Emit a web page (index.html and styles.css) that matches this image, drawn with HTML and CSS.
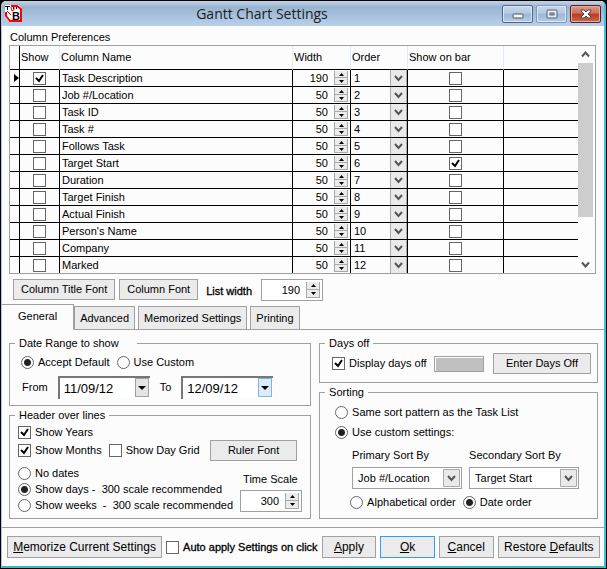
FILE: index.html
```html
<!DOCTYPE html>
<html lang="en">
<head>
    <meta charset="UTF-8">
    <meta name="viewport" content="width=device-width, initial-scale=1.0">
    <title>Gantt Chart Settings</title>
    <link rel="stylesheet" href="styles.css">
</head>
<body>
    <div class="window">
        <header class="titlebar">
            <svg class="logo" width="17" height="17" viewBox="0 0 17 17">
                <path d="M0 0h13l4 3v14H4l-4-5z" fill="#fff"/>
                <path d="M6 1h6l4 3v12H5l-4-5V7" fill="none" stroke="#f00" stroke-width="2"/>
                <path d="M2 6l4 4M6 2l1 4 2-1V2" fill="none" stroke="#f00" stroke-width="1"/>
                <path d="M0 1.500h5M2.500 1v4M8.500 2v2M11.500 2v2" stroke="#000" stroke-width="1"/>
                <text x="7" y="15" class="logo-letter">B</text>
            </svg>
            <h1>Gantt Chart Settings</h1>
            <div class="window-buttons">
                <button type="button" aria-label="Minimize">
                    <svg width="12" height="10" viewBox="0 0 12 10"><rect x="1" y="5" width="10" height="4" rx="1" fill="#f5f5f5" stroke="#4e5564"/></svg>
                </button>
                <button type="button" class="faded" aria-label="Maximize">
                    <svg width="12" height="10" viewBox="0 0 12 10"><rect x="1" y="1" width="10" height="8" rx="1" fill="#e4ebf4" stroke="#555f73"/><rect x="4" y="4" width="4" height="2" fill="#9db6d3" stroke="#555f73"/></svg>
                </button>
                <button type="button" class="close" aria-label="Close">
                    <svg width="12" height="10" viewBox="0 0 12 10"><path d="M1 1h3l2 2 2-2h3v1L8 5l3 3v1H8L6 7 4 9H1V8l3-3-3-3z" fill="#fff" stroke="#5b4350"/></svg>
                </button>
            </div>
        </header>

        <section class="columns">
            <h2>Column Preferences</h2>
            <div class="list">
                <table>
                    <thead>
                        <tr>
                            <th class="c-mark"></th>
                            <th class="c-show">Show</th>
                            <th class="c-name">Column Name</th>
                            <th class="c-width">Width</th>
                            <th class="c-order">Order</th>
                            <th class="c-bar">Show on bar</th>
                            <th class="c-rest"></th>
                        </tr>
                    </thead>
                    <tbody id="rows"></tbody>
                </table>
                <div class="scrollbar">
                    <svg width="9" height="7" viewBox="0 0 9 7"><path d="M1 5.500l3.500-4 3.500 4" fill="none" stroke="#555" stroke-width="2"/></svg>
                    <div class="track"><div class="thumb"></div></div>
                    <svg width="9" height="7" viewBox="0 0 9 7"><path d="M1 1.500l3.500 4 3.500-4" fill="none" stroke="#555" stroke-width="2"/></svg>
                </div>
            </div>
            <div class="list-tools">
                <button type="button" class="btn">Column Title Font</button>
                <button type="button" class="btn">Column Font</button>
                <label class="strong" for="list-width">List width</label>
                <span class="spin boxed">
                    <input type="number" id="list-width" value="190">
                    <span class="arrows"><button type="button" aria-label="Up"></button><button type="button" aria-label="Down"></button></span>
                </span>
            </div>
        </section>

        <nav class="tabs">
            <button type="button" class="tab active">General</button>
            <button type="button" class="tab">Advanced</button>
            <button type="button" class="tab">Memorized Settings</button>
            <button type="button" class="tab">Printing</button>
        </nav>

        <main class="panels">
            <div class="side">
                <fieldset class="range">
                    <legend class="wide">Date Range to show</legend>
                    <div class="row">
                        <label><input type="radio" name="range" checked>Accept Default</label>
                        <label><input type="radio" name="range">Use Custom</label>
                    </div>
                    <div class="row dates">
                        <label for="from">From</label>
                        <span class="date">
                            <input type="text" id="from" value="11/09/12">
                            <button type="button" aria-label="Pick start date"></button>
                        </span>
                        <label for="to">To</label>
                        <span class="date">
                            <input type="text" id="to" value="12/09/12">
                            <button type="button" class="hot" aria-label="Pick end date"></button>
                        </span>
                    </div>
                </fieldset>

                <fieldset class="header-lines">
                    <legend>Header over lines</legend>
                    <label><input type="checkbox" checked>Show Years</label>
                    <div class="row months">
                        <label><input type="checkbox" checked>Show Months</label>
                        <label><input type="checkbox">Show Day Grid</label>
                        <button type="button" class="btn ruler">Ruler Font</button>
                    </div>
                    <div class="row scale">
                        <div class="scale-options">
                            <label><input type="radio" name="scale">No dates</label>
                            <label><input type="radio" name="scale" checked>Show days -&nbsp; 300 scale recommended</label>
                            <label><input type="radio" name="scale">Show weeks&nbsp; -&nbsp; 300 scale recommended</label>
                        </div>
                        <div class="time-scale">
                            <label for="time-scale">Time Scale</label>
                            <span class="spin boxed">
                                <input type="number" id="time-scale" value="300">
                                <span class="arrows"><button type="button" aria-label="Up"></button><button type="button" aria-label="Down"></button></span>
                            </span>
                        </div>
                    </div>
                </fieldset>
            </div>

            <div class="side">
                <fieldset class="days-off">
                    <legend>Days off</legend>
                    <div class="row">
                        <label><input type="checkbox" checked>Display days off</label>
                        <button type="button" class="swatch" aria-label="Days off colour"></button>
                        <button type="button" class="btn enter">Enter Days Off</button>
                    </div>
                </fieldset>

                <fieldset class="sorting">
                    <legend>Sorting</legend>
                    <label><input type="radio" name="sort">Same sort pattern as the Task List</label>
                    <label><input type="radio" name="sort" checked>Use custom settings:</label>
                    <div class="sort-by">
                        <div>
                            <label for="primary">Primary Sort By</label>
                            <select id="primary" class="combo"><option>Job #/Location</option><option>Task ID</option></select>
                        </div>
                        <div>
                            <label for="secondary">Secondary Sort By</label>
                            <select id="secondary" class="combo"><option>Target Start</option><option>Duration</option></select>
                        </div>
                    </div>
                    <div class="row order">
                        <label><input type="radio" name="order">Alphabetical order</label>
                        <label><input type="radio" name="order" checked>Date order</label>
                    </div>
                </fieldset>
            </div>
        </main>

        <footer class="actions">
            <button type="button" class="btn memorize"><u>M</u>emorize Current Settings</button>
            <label class="strong"><input type="checkbox">Auto apply Settings on click</label>
            <button type="button" class="btn"><u>A</u>pply</button>
            <button type="button" class="btn default"><u>O</u>k</button>
            <button type="button" class="btn"><u>C</u>ancel</button>
            <button type="button" class="btn restore">Restore <u>D</u>efaults</button>
        </footer>
    </div>

    <script>
        const columns = [
            { name: 'Task Description', width: 190, show: true },
            { name: 'Job #/Location', width: 50 },
            { name: 'Task ID', width: 50 },
            { name: 'Task #', width: 50 },
            { name: 'Follows Task', width: 50 },
            { name: 'Target Start', width: 50, bar: true },
            { name: 'Duration', width: 50 },
            { name: 'Target Finish', width: 50 },
            { name: 'Actual Finish', width: 50 },
            { name: "Person's Name", width: 50 },
            { name: 'Company', width: 50 },
            { name: 'Marked', width: 50 }
        ];

        document.getElementById('rows').innerHTML = columns.map((col, i) => `
            <tr>
                <td class="c-mark">${i === 0 ? '<span class="marker"></span>' : ''}</td>
                <td class="c-check"><input type="checkbox" aria-label="Show ${col.name}" ${col.show ? 'checked' : ''}></td>
                <td class="c-label">${col.name}</td>
                <td><span class="spin">
                    <input type="number" aria-label="Width of ${col.name}" value="${col.width}">
                    <span class="arrows"><button type="button" aria-label="Up"></button><button type="button" aria-label="Down"></button></span>
                </span></td>
                <td><select class="cell-combo" aria-label="Order of ${col.name}">
                    ${columns.map((c, n) => `<option ${n === i ? 'selected' : ''}>${n + 1}</option>`).join('')}
                </select></td>
                <td class="c-check"><input type="checkbox" aria-label="${col.name} on bar" ${col.bar ? 'checked' : ''}></td>
                <td class="c-rest"></td>
            </tr>
        `).join('');

        // up / down arrows change the number next to them
        document.querySelectorAll('.spin').forEach(spin => {
            const input = spin.querySelector('input');
            const [up, down] = spin.querySelectorAll('button');
            up.addEventListener('click', () => input.stepUp());
            down.addEventListener('click', () => input.stepDown());
        });

        const tabs = document.querySelectorAll('.tab');
        tabs.forEach(tab => tab.addEventListener('click', () => {
            tabs.forEach(t => t.classList.toggle('active', t === tab));
        }));
    </script>
</body>
</html>
```
FILE: styles.css
```css
* {
    box-sizing: border-box;
}

body {
    margin: 0;
    background: #000;
    font-family: "Liberation Sans", Arial, sans-serif;
    font-size: 11px;
    line-height: 13px;
    color: #000;
}

button, input, select {
    font: inherit;
    color: inherit;
    margin: 0;
    padding: 0;
}

h1, h2 {
    margin: 0;
    font-weight: normal;
}

.window {
    display: flex;
    flex-direction: column;
    min-height: calc(100vh - 2px);
    margin: 1px 1px 1px;
    background: #fcfcfc;
    border: 1px solid #a9c6e8;
    border-right: 2px solid #35c3e8;
    border-bottom: 2px solid #35b8d0;
    border-top: 0;
    border-radius: 5px 5px 0 0;
    overflow: hidden;
}

/* title bar */
.titlebar {
    display: flex;
    align-items: center;
    height: 25px;
    padding: 0 3px;
    background: linear-gradient(#c3d3e6, #99b4d1 25%, #b8d0ea);
}

.logo-letter {
    font: bold 11px "Liberation Sans", Arial, sans-serif;
}

.titlebar h1 {
    flex: 1;
    text-align: center;
    font-family: "Open Sans", sans-serif;
    font-size: 14px;
    line-height: 22px;
    color: #1c1c1c;
}

.window-buttons {
    display: flex;
    gap: 3px;
}

.window-buttons button {
    display: flex;
    align-items: center;
    justify-content: center;
    width: 31px;
    height: 18px;
    background: linear-gradient(#c5d6ea, #b3cae4 45%, #9bb7d6 50%, #b4cce6);
    border: 1px solid #56657f;
    border-radius: 2px;
    box-shadow: inset 0 0 0 1px #d9e6f4;
}

.window-buttons .faded {
    border-color: #8599b5;
}

.window-buttons .close {
    background: linear-gradient(#dd9a8c, #cf6f5c 45%, #b93a21 50%, #cc6a50);
    border-color: #56202a;
    box-shadow: inset 0 0 0 1px #e5aca0;
}

/* check boxes and radios */
input[type="checkbox"], input[type="radio"] {
    appearance: none;
    flex: none;
    width: 13px;
    height: 13px;
    background: #fff no-repeat center;
    border: 1px solid #666;
}

input[type="radio"] {
    border-radius: 50%;
}

input[type="checkbox"]:checked {
    background-image: url("data:image/svg+xml,%3Csvg xmlns='http://www.w3.org/2000/svg' width='11' height='11'%3E%3Cpath d='M2 5l3 3 4-6' fill='none' stroke='%23000' stroke-width='2'/%3E%3C/svg%3E");
}

input[type="radio"]:checked {
    background-image: radial-gradient(circle, #222 3px, transparent 4px);
}

label {
    display: flex;
    align-items: center;
    gap: 4px;
    white-space: nowrap;
}

.strong {
    -webkit-text-stroke: 0.3px #000;
}

/* column list */
.columns {
    padding: 3px 8px 3px 7px;
}

.columns h2 {
    padding-left: 1px;
    font-size: 11px;
    line-height: 16px;
}

.list {
    display: flex;
    border: 1px solid #a0a0a0;
}

table {
    width: 100%;
    table-layout: fixed;
    border-collapse: separate;
    border-spacing: 0;
}

th, td {
    padding: 0;
    border-right: 1px solid #000;
    border-bottom: 1px solid #000;
}

th {
    height: 24px;
    padding-left: 1px;
    text-align: left;
    font-weight: normal;
    border-right-color: #dfecfa;
}

td {
    height: 17px;
}

tbody tr:last-child td {
    height: 16px;
    border-bottom: 0;
}

th.c-mark {
    width: 10px;
    border-right-color: #000;
}

.c-show { width: 40px; }
.c-width { width: 58px; }
.c-order { width: 57px; }
.c-bar { width: 96px; }

.c-rest {
    width: 74px;
    border-right: 0;
}

.c-label {
    padding-left: 2px;
}

.c-check input {
    display: block;
    margin: 0 auto;
}

.marker {
    display: block;
    margin-left: 4px;
    border: 4px solid transparent;
    border-left: 5px solid #000;
    border-right: 0;
}

.scrollbar {
    display: flex;
    flex: none;
    flex-direction: column;
    align-items: center;
    gap: 5px;
    width: 17px;
    padding: 5px 2px 5px 0;
}

.track {
    flex: 1;
    width: 15px;
}

.thumb {
    height: 80%;
    background: #cdcdcd;
}

/* number boxes with arrows */
.spin {
    display: flex;
    align-items: center;
    height: 16px;
    padding-right: 2px;
}

.spin input {
    appearance: textfield;
    flex: 1;
    min-width: 0;
    padding-right: 6px;
    text-align: right;
    background: none;
    border: 0;
    outline: 0;
}

.spin input::-webkit-inner-spin-button {
    appearance: none;
    display: none;
}

.arrows {
    display: flex;
    flex-direction: column;
    width: 14px;
    height: 14px;
}

.arrows button {
    flex: 1;
    background: #ebebeb url("data:image/svg+xml,%3Csvg xmlns='http://www.w3.org/2000/svg' width='5' height='3'%3E%3Cpath d='M0 3h5L2.500 0z'/%3E%3C/svg%3E") no-repeat center;
    border: 1px solid #a9a9a9;
    border-top: 0;
}

.arrows button:last-child {
    background-image: url("data:image/svg+xml,%3Csvg xmlns='http://www.w3.org/2000/svg' width='5' height='3'%3E%3Cpath d='M0 0h5L2.500 3z'/%3E%3C/svg%3E");
}

.spin.boxed {
    width: 62px;
    height: 22px;
    background: #fff;
    border: 1px solid #a0a0a0;
}

.boxed .arrows {
    height: 16px;
}

/* drop-downs */
.cell-combo, .combo {
    display: block;
    appearance: none;
    width: 100%;
    border: 0;
    border-radius: 0;
    outline: 0;
    background: url("data:image/svg+xml,%3Csvg xmlns='http://www.w3.org/2000/svg' width='17' height='18'%3E%3Cpath d='M.5.5h16v17H.5z' fill='%23e9e9e9' stroke='%23aaa'/%3E%3Cpath d='M5 7l3.500 4L12 7' fill='none' stroke='%23555' stroke-width='2'/%3E%3C/svg%3E") no-repeat right center;
}

.cell-combo {
    height: 16px;
    padding-left: 3px;
}

.combo {
    height: 22px;
    padding-left: 5px;
    background-color: #fff;
    background-position: right 1px center;
    border: 1px solid #a0a0a0;
}

/* push buttons */
.btn {
    height: 21px;
    padding: 0 7px;
    background: #ebebeb;
    border: 1px solid #a0a0a0;
    white-space: nowrap;
}

.list-tools {
    display: flex;
    align-items: flex-start;
    gap: 4px;
    padding: 5px 0 0 4px;
}

.list-tools .strong {
    padding: 6px 5px 0 4px;
}

/* tabs */
.tabs {
    display: flex;
    align-items: flex-end;
    gap: 3px;
    height: 26px;
    box-shadow: inset 0 -1px #a0a0a0;
}

.tab {
    height: 24px;
    padding: 0 5px;
    background: #ebebeb;
    border: 1px solid #a0a0a0;
}

.tab.active {
    height: 26px;
    margin-right: -3px;
    padding: 0 16px 2px;
    background: #fcfcfc;
    border-left: 0;
    border-bottom-color: #fcfcfc;
}

/* option groups */
.panels {
    display: grid;
    grid-template-columns: 301fr 280fr;
    gap: 8px;
    padding: 7px 6px 7px 7px;
}

.side {
    display: flex;
    flex-direction: column;
    gap: 3px;
}

fieldset {
    min-width: 0;
    margin: 0;
    padding: 0 8px;
    border: 1px solid #a0a0a0;
}

legend {
    margin-left: -3px;
    padding: 0 4px;
}

legend.wide {
    padding-right: 18px;
}

.row {
    display: flex;
    align-items: center;
    gap: 7px;
}

.range {
    padding: 6px 11px;
}

.range legend {
    margin-left: -6px;
}

.dates {
    gap: 10px;
    padding: 7px 0 0 1px;
}

.date {
    display: flex;
    width: 92px;
    height: 23px;
    background: #fff;
    border: 2px solid #777;
    border-right: 0;
    border-bottom: 0;
}

.date input {
    flex: 1;
    min-width: 0;
    padding-left: 4px;
    font-size: 13px;
    background: none;
    border: 0;
    outline: 0;
}

.date button {
    width: 14px;
    height: 19px;
    margin-right: 1px;
    background: #e4e4e4 url("data:image/svg+xml,%3Csvg xmlns='http://www.w3.org/2000/svg' width='8' height='4'%3E%3Cpath d='M0 0h8L4 4z'/%3E%3C/svg%3E") no-repeat center;
    border: 1px solid #a0a0a0;
}

.date .hot {
    background-color: #dcecfc;
    border-color: #7eb4ea;
}

.header-lines {
    padding: 4px 8px 6px;
}

.months {
    padding-top: 1px;
}

.months .ruler {
    flex: 0 1 87px;
    margin-left: auto;
    margin-right: 5px;
}

.scale {
    align-items: flex-end;
    justify-content: space-between;
}

.scale-options {
    display: flex;
    flex-direction: column;
    gap: 3px;
    padding-top: 6px;
}

.time-scale label {
    padding: 0 0 4px 3px;
}

.days-off {
    padding: 3px 6px 8px 12px;
}

.days-off legend {
    margin-left: -7px;
}

.swatch {
    width: 50px;
    height: 16px;
    background: #c0c0c0;
    border: 1px solid #a0a0a0;
    box-shadow: inset 1px 1px #fff;
}

.enter {
    flex: 0 1 98px;
    margin-left: auto;
}

.sorting {
    flex: 1;
    padding: 7px 15px 6px;
}

.sorting legend {
    margin-left: -10px;
}

.sorting > label + label {
    margin-top: 7px;
}

.sort-by {
    display: grid;
    grid-template-columns: 110px 110px;
    gap: 7px;
    padding: 10px 0 7px 17px;
}

.sort-by label {
    padding-bottom: 5px;
}

.order {
    padding-left: 15px;
}

/* bottom bar */
.actions {
    display: flex;
    align-items: center;
    gap: 4px;
    margin-top: auto;
    padding: 8px 4px 8px 5px;
    border-top: 1px solid #a0a0a0;
}

.actions .btn {
    flex: 54 1 0;
    height: 22px;
    padding: 0;
    font-size: 12px;
}

.actions .memorize {
    flex: 157 1 0;
}

.actions .restore {
    flex: 103 1 0;
}

.actions .default {
    border-color: #3399ff;
}
```
